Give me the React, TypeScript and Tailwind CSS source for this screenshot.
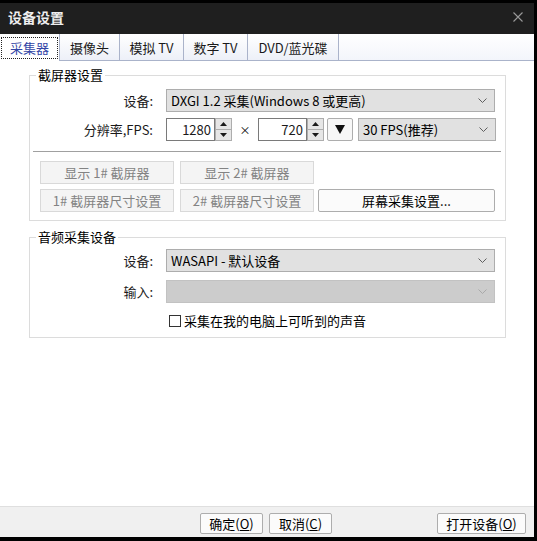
import React from "react";

const Chevron: React.FC<{ disabled?: boolean }> = ({ disabled }) => (
  <svg width="9" height="5" viewBox="0 0 9 5" className="shrink-0">
    <path
      d="M0.5 0.5 L4.5 4.5 L8.5 0.5"
      fill="none"
      stroke={disabled ? "#a9a9a9" : "#5f5f5f"}
      strokeWidth="1"
    />
  </svg>
);

const Select: React.FC<{ value?: string; className: string; disabled?: boolean }> = ({
  value,
  className,
  disabled,
}) => (
  <div
    className={`flex h-[23px] items-center justify-between border pl-[4px] pr-[7px] ${
      disabled ? "border-[#c2c2c2] bg-[#cccccc]" : "border-[#adadad] bg-[#e1e1e1]"
    } ${className}`}
  >
    <span className="whitespace-nowrap text-[13px] leading-[16px] text-black">{value}</span>
    <Chevron disabled={disabled} />
  </div>
);

const SpinBox: React.FC<{ value: string }> = ({ value }) => (
  <div className="flex h-[23px]">
    <div className="flex w-[49px] items-center justify-end border border-[#7a7a7a] bg-white pr-[3px] text-[13px] leading-[16px]">
      {value}
    </div>
    <div className="flex w-[17px] flex-col">
      <div className="flex h-[12px] items-center justify-center border border-[#adadad] bg-[#e6e6e6]">
        <svg width="7" height="4" viewBox="0 0 7 4">
          <path d="M0 4 L3.5 0 L7 4 Z" fill="#1a1a1a" />
        </svg>
      </div>
      <div className="flex h-[11px] items-center justify-center border border-t-0 border-[#adadad] bg-[#e6e6e6]">
        <svg width="7" height="4" viewBox="0 0 7 4">
          <path d="M0 0 L3.5 4 L7 0 Z" fill="#1a1a1a" />
        </svg>
      </div>
    </div>
  </div>
);

const Label: React.FC<{ children: React.ReactNode }> = ({ children }) => (
  <div className="w-[123px] shrink-0 text-right text-[13px] leading-[16px] text-[#1a1a1a]">
    {children}
  </div>
);

const tabs = [
  { name: "采集器", w: "w-[60px]" },
  { name: "摄像头", w: "w-[60px]" },
  { name: "模拟 TV", w: "w-[64px]" },
  { name: "数字 TV", w: "w-[64px]" },
  { name: "DVD/蓝光碟", w: "w-[91px]" },
];

const App: React.FC = () => {
  return (
    <div className="flex h-[541px] w-[537px] flex-col bg-black pb-[4px] pr-[3px] pt-[3px] font-['Noto_Sans_CJK_SC',sans-serif] text-[#1a1a1a]">
      {/* title bar */}
      <div className="flex h-[31px] shrink-0 items-center justify-between bg-[#1f1f1f] pb-[4px] pl-[8px] pr-[11px]">
        <span className="text-[14px] font-bold leading-[16px] text-[#eeeeee]">设备设置</span>
        <svg width="10" height="10" viewBox="0 0 10 10">
          <path d="M0.5 0.5 L9.5 9.5 M9.5 0.5 L0.5 9.5" stroke="#9a9a9a" strokeWidth="1.1" />
        </svg>
      </div>

      {/* tabs */}
      <div className="flex h-[27px] shrink-0 border-b border-[#aab3ca] bg-linear-to-b from-[#ffffff] to-[#f3f5fb]">
        {tabs.map((tab, i) =>
          i === 0 ? (
            <div
              key={tab.name}
              className={`${tab.w} -mb-px flex h-[27px] border-r border-[#aab3ca] bg-white pb-[2px] pl-[1px] pr-[1px] pt-[3px]`}
            >
              <div className="flex flex-1 items-center justify-center border border-dotted border-[#222222] text-[13px] leading-[16px] text-[#3346a6]">
                {tab.name}
              </div>
            </div>
          ) : (
            <div
              key={tab.name}
              className={`${tab.w} flex h-[26px] items-center justify-center border-r border-[#aab3ca] bg-linear-to-b from-[#ffffff] to-[#edf0f8] pt-[2px] text-[13px] leading-[16px] text-[#1a1a1a]`}
            >
              {tab.name}
            </div>
          )
        )}
      </div>

      {/* content */}
      <div className="flex-1 bg-white">
        <fieldset className="ml-[29px] mt-[6px] w-[477px] border border-[#dcdcdc] pb-[8px]">
          <legend className="ml-[6px] px-[2px] text-[13px] leading-[16px] text-black">截屏器设置</legend>
          <div className="mt-[6px] flex items-center">
            <Label>设备:</Label>
            <Select className="ml-[13px] w-[329px]" value="DXGI 1.2 采集(Windows 8 或更高)" />
          </div>
          <div className="mt-[6px] flex items-center">
            <Label>分辨率,FPS:</Label>
            <div className="ml-[13px]">
              <SpinBox value="1280" />
            </div>
            <div className="w-[26px] text-center text-[11px] leading-[16px] text-black">×</div>
            <SpinBox value="720" />
            <div className="ml-[3px] flex h-[23px] w-[26px] items-center justify-center rounded-[2px] border border-[#adadad] bg-[#f7f7f7]">
              <svg width="10" height="9" viewBox="0 0 10 9">
                <path d="M0 0 L10 0 L5 9 Z" fill="#111111" />
              </svg>
            </div>
            <Select className="ml-[5px] w-[138px]" value="30 FPS(推荐)" />
          </div>
          <div className="ml-[3px] mt-[10px] h-px w-[468px] bg-[#a0a0a0]" />
          <div className="ml-[10px] mt-[9px] flex gap-[6px]">
            <button className="h-[23px] w-[134px] border border-[#d9d9d9] bg-[#f4f4f4] text-[13px] leading-[16px] text-[#838383]">
              显示 1# 截屏器
            </button>
            <button className="h-[23px] w-[134px] border border-[#d9d9d9] bg-[#f4f4f4] text-[13px] leading-[16px] text-[#838383]">
              显示 2# 截屏器
            </button>
          </div>
          <div className="ml-[10px] mt-[5px] flex">
            <button className="h-[23px] w-[134px] border border-[#d9d9d9] bg-[#f4f4f4] text-[13px] leading-[16px] text-[#838383]">
              1# 截屏器尺寸设置
            </button>
            <button className="ml-[6px] h-[23px] w-[134px] border border-[#d9d9d9] bg-[#f4f4f4] text-[13px] leading-[16px] text-[#838383]">
              2# 截屏器尺寸设置
            </button>
            <button className="ml-[4px] h-[23px] w-[177px] rounded-[2px] border border-[#adadad] bg-[#fbfbfb] text-[13px] leading-[16px] text-black">
              屏幕采集设置...
            </button>
          </div>
        </fieldset>

        <fieldset className="ml-[29px] mt-[8px] w-[477px] border border-[#dcdcdc] pb-[8px]">
          <legend className="ml-[6px] px-[2px] text-[13px] leading-[16px] text-black">音频采集设备</legend>
          <div className="mt-[4px] flex items-center">
            <Label>设备:</Label>
            <Select className="ml-[13px] w-[329px]" value="WASAPI - 默认设备" />
          </div>
          <div className="mt-[8px] flex items-center">
            <Label>输入:</Label>
            <Select className="ml-[13px] w-[329px]" disabled />
          </div>
          <div className="ml-[139px] mt-[10px] flex items-center">
            <div className="h-[12px] w-[12px] border border-[#333333] bg-white" />
            <span className="ml-[3px] text-[13px] leading-[16px] text-black">采集在我的电脑上可听到的声音</span>
          </div>
        </fieldset>
      </div>

      {/* footer */}
      <div className="flex h-[31px] shrink-0 items-start border-t border-[#dfdfdf] bg-[#f0f0f0] pl-[200px] pr-[8px] pt-[6px]">
        <button className="h-[21px] w-[63px] rounded-[2px] border border-[#adadad] bg-[#fbfbfb] text-[13px] leading-[16px] text-black">
          确定(<span className="underline">O</span>)
        </button>
        <button className="ml-[6px] h-[21px] w-[63px] rounded-[2px] border border-[#adadad] bg-[#fbfbfb] text-[13px] leading-[16px] text-black">
          取消(<span className="underline">C</span>)
        </button>
        <button className="ml-auto h-[21px] w-[89px] rounded-[2px] border border-[#adadad] bg-[#fbfbfb] text-[13px] leading-[16px] text-black">
          打开设备(<span className="underline">O</span>)
        </button>
      </div>
    </div>
  );
};

export default App;
